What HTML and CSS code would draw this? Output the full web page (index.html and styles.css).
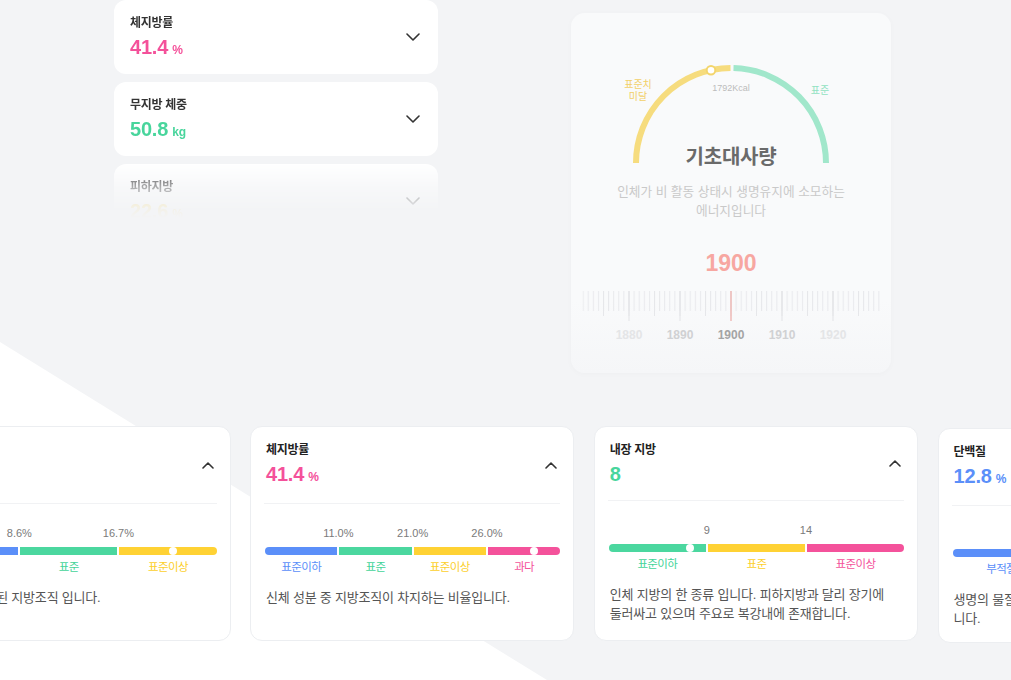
FILE: index.html
```html
<!DOCTYPE html>
<html lang="ko">
<head>
<meta charset="utf-8">
<title>체성분</title>
<link rel="stylesheet" href="styles.css">
</head>
<body>
<div class="page">
  <div class="bg-shape"></div>

  <div class="top">
    <div class="list">
      <div class="item">
        <div class="item-text">
          <div class="label">체지방률</div>
          <div class="value pink">41.4<span class="unit">%</span></div>
        </div>
        <svg class="chev" width="14" height="8" viewBox="0 0 14 8"><path d="M1 1l6 6 6-6"/></svg>
      </div>
      <div class="item">
        <div class="item-text">
          <div class="label">무지방 체중</div>
          <div class="value green">50.8<span class="unit">kg</span></div>
        </div>
        <svg class="chev" width="14" height="8" viewBox="0 0 14 8"><path d="M1 1l6 6 6-6"/></svg>
      </div>
      <div class="item">
        <div class="item-text">
          <div class="label">피하지방</div>
          <div class="value yellow">22.6<span class="unit">%</span></div>
        </div>
        <svg class="chev" width="14" height="8" viewBox="0 0 14 8"><path d="M1 1l6 6 6-6"/></svg>
      </div>
    </div>

    <div class="bmr">
      <div class="gauge">
        <svg class="gauge-svg" width="320" height="156" viewBox="0 0 320 156">
          <path d="M65 150A95 95 0 0 1 159.5 55" class="arc-y"/>
          <path d="M162.5 55.03A95 95 0 0 1 255 150" class="arc-g"/>
          <circle cx="140" cy="57.2" r="4.3" class="knob"/>
          <text x="67" y="75" class="g-lbl-y">표준치</text>
          <text x="67" y="87" class="g-lbl-y">미달</text>
          <text x="160" y="78" class="g-kcal">1792Kcal</text>
          <text x="249" y="81" class="g-lbl-g">표준</text>
        </svg>
        <div class="gauge-title">기초대사량</div>
      </div>
      <p class="bmr-desc">인체가 비 활동 상태시 생명유지에 소모하는<br>에너지입니다</p>
      <div class="bmr-value">1900</div>
      <svg class="ruler" width="320" height="76" viewBox="0 0 320 76">
        <defs>
          <pattern id="t1" x="159.5" y="0" width="5.1" height="76" patternUnits="userSpaceOnUse"><rect x="0" y="0" width="1" height="76" fill="#e8e9ec"/></pattern>
          <pattern id="t5" x="159.5" y="0" width="25.5" height="76" patternUnits="userSpaceOnUse"><rect x="0" y="0" width="1" height="76" fill="#e6e7ea"/></pattern>
          <pattern id="t10" x="159.5" y="0" width="51" height="76" patternUnits="userSpaceOnUse"><rect x="0" y="0" width="1" height="76" fill="#e2e3e6"/></pattern>
        </defs>
        <rect x="11.5" y="14" width="297.5" height="20" fill="url(#t1)"/>
        <rect x="11.5" y="14" width="297.5" height="25" fill="url(#t5)"/>
        <rect x="11.5" y="14" width="297.5" height="30" fill="url(#t10)"/>
        <rect x="159.5" y="14" width="1" height="30" fill="#f6a6a0"/>
        <text x="58" y="62" class="r-lbl r-far">1880</text>
        <text x="109" y="62" class="r-lbl r-near">1890</text>
        <text x="160" y="62" class="r-lbl r-cur">1900</text>
        <text x="211" y="62" class="r-lbl r-near">1910</text>
        <text x="262" y="62" class="r-lbl r-far">1920</text>
      </svg>
    </div>
  </div>

  <div class="cards">
    <div class="card n3">
      <div class="card-head">
        <div class="head-text">
          <div class="title">피하지방</div>
          <div class="value yellow">22.6<span class="unit">%</span></div>
        </div>
        <svg class="chev-up" width="12" height="7" viewBox="0 0 12 7"><path d="M1 6l5-5 5 5"/></svg>
      </div>
      <div class="divider"></div>
      <div class="range">
        <div class="th"><span>8.6%</span><span>16.7%</span></div>
        <div class="bar">
          <div class="seg s-blue"></div>
          <div class="seg s-green"></div>
          <div class="seg s-yellow"><i class="mk" style="left:55%"></i></div>
        </div>
        <div class="sl"><span class="c-blue">표준이하</span><span class="c-green">표준</span><span class="c-yellow">표준이상</span></div>
      </div>
      <p class="desc">피하층에 축적된 지방조직 입니다.</p>
    </div>

    <div class="card n4">
      <div class="card-head">
        <div class="head-text">
          <div class="title">체지방률</div>
          <div class="value pink">41.4<span class="unit">%</span></div>
        </div>
        <svg class="chev-up" width="12" height="7" viewBox="0 0 12 7"><path d="M1 6l5-5 5 5"/></svg>
      </div>
      <div class="divider"></div>
      <div class="range">
        <div class="th"><span>11.0%</span><span>21.0%</span><span>26.0%</span></div>
        <div class="bar">
          <div class="seg s-blue"></div>
          <div class="seg s-green"></div>
          <div class="seg s-yellow"></div>
          <div class="seg s-pink"><i class="mk" style="left:64%"></i></div>
        </div>
        <div class="sl"><span class="c-blue">표준이하</span><span class="c-green">표준</span><span class="c-yellow">표준이상</span><span class="c-pink">과다</span></div>
      </div>
      <p class="desc">신체 성분 중 지방조직이 차지하는 비율입니다.</p>
    </div>

    <div class="card n3">
      <div class="card-head">
        <div class="head-text">
          <div class="title">내장 지방</div>
          <div class="value green">8</div>
        </div>
        <svg class="chev-up" width="12" height="7" viewBox="0 0 12 7"><path d="M1 6l5-5 5 5"/></svg>
      </div>
      <div class="divider"></div>
      <div class="range">
        <div class="th"><span>9</span><span>14</span></div>
        <div class="bar">
          <div class="seg s-green"><i class="mk" style="left:84%"></i></div>
          <div class="seg s-yellow"></div>
          <div class="seg s-pink"></div>
        </div>
        <div class="sl"><span class="c-green">표준이하</span><span class="c-yellow">표준</span><span class="c-pink">표준이상</span></div>
      </div>
      <p class="desc">인체 지방의 한 종류 입니다. 피하지방과 달리 장기에 둘러싸고 있으며 주요로 복강내에 존재합니다.</p>
    </div>

    <div class="card n3 shifted">
      <div class="card-head">
        <div class="head-text">
          <div class="title">단백질</div>
          <div class="value blue">12.8<span class="unit">%</span></div>
        </div>
        <svg class="chev-up" width="12" height="7" viewBox="0 0 12 7"><path d="M1 6l5-5 5 5"/></svg>
      </div>
      <div class="divider"></div>
      <div class="range">
        <div class="th"><span>14.0%</span><span>18.0%</span></div>
        <div class="bar">
          <div class="seg s-blue"></div>
          <div class="seg s-green"></div>
          <div class="seg s-yellow"></div>
        </div>
        <div class="sl"><span class="c-blue">부적절</span><span class="c-green">표준</span><span class="c-yellow">과다</span></div>
      </div>
      <p class="desc">생명의 물질로 불리며 근육과 피부를 구성하는 성분입<br>니다.</p>
    </div>
  </div>
</div>
</body>
</html>
```

FILE: styles.css
```css
* { box-sizing: border-box; }

html, body {
  margin: 0;
  padding: 0;
}

body {
  font-family: "Liberation Sans", "Noto Sans CJK KR", sans-serif;
  background: #f3f4f6;
  color: #333;
}

.page {
  position: relative;
  width: 1011px;
  height: 680px;
  overflow: hidden;
  background: #f3f4f6;
}

.bg-shape {
  position: absolute;
  inset: 0;
  background: #ffffff;
  clip-path: polygon(0 342px, 547px 680px, 0 680px);
}

/* ---------- top area ---------- */
.top {
  position: relative;
  display: flex;
  align-items: flex-start;
  height: 426px;
  padding-left: 114px;
}

.list {
  width: 324px;
  margin-top: 0;
  display: flex;
  flex-direction: column;
  gap: 8px;
  -webkit-mask-image: linear-gradient(to bottom, #000 0, #000 162px, rgba(0,0,0,0.36) 188px, rgba(0,0,0,0.08) 208px, rgba(0,0,0,0) 218px);
  mask-image: linear-gradient(to bottom, #000 0, #000 162px, rgba(0,0,0,0.36) 188px, rgba(0,0,0,0.08) 208px, rgba(0,0,0,0) 218px);
}

.item {
  height: 74px;
  background: #fff;
  border-radius: 12px;
  display: flex;
  align-items: center;
  justify-content: space-between;
  padding: 0 18px 0 16px;
}

.item-text {
  padding: 15px 0 14px;
}

.label {
  font-size: 12px;
  font-weight: bold;
  line-height: 18px;
  color: #333;
  letter-spacing: -0.3px;
}

.value {
  margin-top: 3px;
  font-size: 20px;
  font-weight: bold;
  line-height: 24px;
  letter-spacing: -0.2px;
}

.unit {
  font-size: 12px;
  margin-left: 4px;
  letter-spacing: 0;
}

.pink { color: #f4519a; }
.green { color: #48d59c; }
.yellow { color: #ffcf2e; }
.blue { color: #5b8ff9; }

.chev, .chev-up {
  fill: none;
  stroke: #333;
  stroke-width: 1.6;
  stroke-linecap: round;
  stroke-linejoin: round;
  flex: none;
}

/* ---------- BMR card ---------- */
.bmr {
  width: 320px;
  height: 360px;
  margin-left: 133px;
  margin-top: 13px;
  border-radius: 14px;
  background: linear-gradient(to bottom, #f9fafb 0, #f9fafb 80%, #f5f6f8 100%);
  box-shadow: 0 1px 6px rgba(0, 0, 0, 0.025);
  display: flex;
  flex-direction: column;
  align-items: center;
}

.gauge {
  display: grid;
  width: 320px;
}

.gauge-svg {
  grid-area: 1 / 1;
  display: block;
}

.gauge-title {
  grid-area: 1 / 1;
  align-self: end;
  justify-self: center;
  margin-bottom: 0;
  font-size: 20px;
  font-weight: bold;
  line-height: 24px;
  color: #6a6a6a;
  letter-spacing: -0.2px;
}

.arc-y {
  fill: none;
  stroke: #f6dc7e;
  stroke-width: 6;
}

.arc-g {
  fill: none;
  stroke: #a1e7cb;
  stroke-width: 6;
}

.knob {
  fill: #fff;
  stroke: #f3d56c;
  stroke-width: 2;
}

.g-lbl-y, .g-lbl-g, .g-kcal {
  font-family: "Liberation Sans", "Noto Sans CJK KR", sans-serif;
  text-anchor: middle;
}

.g-lbl-y {
  font-size: 10px;
  fill: #f2d068;
}

.g-lbl-g {
  font-size: 10px;
  fill: #92e2c2;
}

.g-kcal {
  font-size: 9px;
  fill: #bcbcbc;
}

.bmr-desc {
  margin: 14px 0 0;
  font-size: 12.7px;
  line-height: 19px;
  color: #c9c9c9;
  text-align: center;
}

.bmr-value {
  margin-top: 28px;
  font-size: 23px;
  font-weight: bold;
  line-height: 28px;
  color: #f7a7a1;
}

.ruler {
  display: block;
}

.r-lbl {
  font-family: "Liberation Sans", sans-serif;
  font-size: 12px;
  font-weight: bold;
  text-anchor: middle;
}

.r-far { fill: #e4e5e7; }
.r-near { fill: #d0d1d3; }
.r-cur { fill: #a4a4a4; }

/* ---------- bottom cards ---------- */
.cards {
  position: relative;
  display: flex;
  gap: 19.5px;
  margin-left: -93.8px;
  align-items: flex-start;
}

.card {
  flex: 0 0 324.3px;
  height: 215px;
  background: #fff;
  border: 1px solid #eceef1;
  border-radius: 12px;
}

.card.shifted {
  margin-top: 2px;
}

.n3 { --n: 3; }
.n4 { --n: 4; }

.card-head {
  display: flex;
  align-items: center;
  justify-content: space-between;
  padding: 0 16px 0 15px;
}

.head-text {
  padding: 14px 0 14px;
}

.title {
  font-size: 12px;
  font-weight: bold;
  line-height: 18px;
  color: #222;
  letter-spacing: -0.3px;
}

.divider {
  height: 1px;
  margin: 0 13px;
  background: #f1f2f4;
}

.range {
  padding: 0 13px 0 14px;
}

.th, .bar, .sl {
  display: grid;
  grid-template-columns: repeat(var(--n), 1fr);
  column-gap: 2px;
}

.th {
  margin-top: 22px;
  height: 14px;
  font-size: 11px;
  line-height: 14px;
  color: #7a7a7a;
}

.th span {
  justify-self: end;
  transform: translateX(calc(50% + 1px));
  white-space: nowrap;
}

.bar {
  margin-top: 7px;
  height: 8px;
  border-radius: 4px;
  overflow: hidden;
}

.seg {
  position: relative;
}

.s-blue { background: #5b8ff9; }
.s-green { background: #4bd79f; }
.s-yellow { background: #ffd234; }
.s-pink { background: #f4529b; }

.mk {
  position: absolute;
  top: 0;
  width: 8px;
  height: 8px;
  margin-left: -4px;
  border-radius: 50%;
  background: #fff;
}

.sl {
  margin-top: 4px;
  font-size: 11.5px;
  line-height: 16px;
  letter-spacing: -0.6px;
  text-align: center;
}

.c-blue { color: #5b8ff9; }
.c-green { color: #44d49a; }
.c-yellow { color: #fccf2c; }
.c-pink { color: #f4529b; }

.desc {
  margin: 13px 0 0;
  padding: 0 14px 0 15px;
  font-size: 13px;
  line-height: 19px;
  color: #555;
  letter-spacing: -0.2px;
  word-break: keep-all;
}
```
